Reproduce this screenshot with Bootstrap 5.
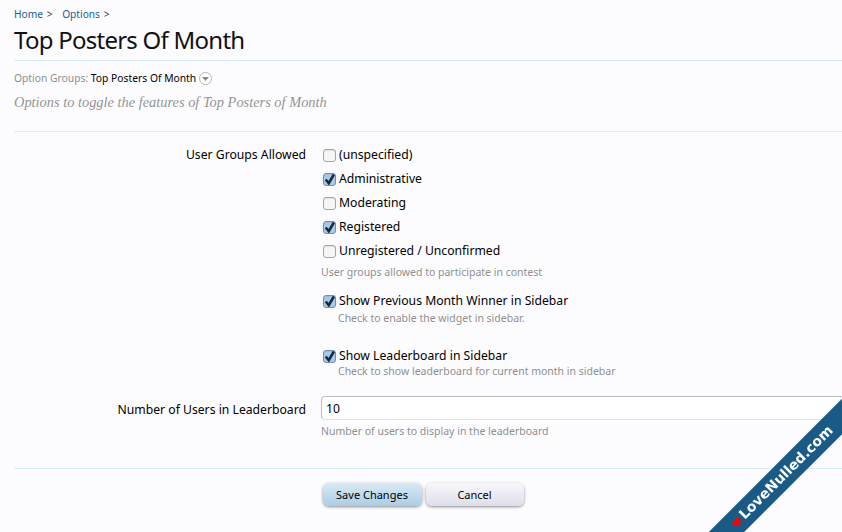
<!DOCTYPE html>
<html lang="en">
<head>
  <meta charset="UTF-8" />
  <meta name="viewport" content="width=device-width, initial-scale=1.0"/>
  <title>Top Posters Of Month - Options</title>
  <link href="https://cdn.jsdelivr.net/npm/bootstrap@5.3.0/dist/css/bootstrap.min.css" rel="stylesheet"/>
  <style>
    html, body { height: 532px; overflow: hidden; }
    body { background: #fcfcff; color: #000; font-family: "Noto Sans", "DejaVu Sans", sans-serif; font-size: 12.2px; line-height: 16px; }
    .page-wrap { padding: 8px 0 0 14px; }
    .crumbs { font-size: 10.2px; line-height: 13px; color: #333; }
    .crumbs a { color: #176093; text-decoration: none; margin-right: 1px; }
    .crumbs span { margin-right: 7px; }
    .page-title { font-family: "Noto Sans", sans-serif; font-size: 24px; line-height: 30px; font-weight: 400; letter-spacing: -.75px; margin: 4px 0 5px; color: #111; }
    .rule { border-top: 1px solid #d7edfc; }
    .rule-grey { border-top: 1px solid #e2eaf2; }
    .groups { font-size: 10.3px; line-height: 14px; margin-top: 10px; color: #8f8f8f; }
    .groups b { font-weight: 400; color: #000; }
    .drop-ico { width: 13px; height: 13px; vertical-align: -3px; margin-left: 3px; }
    .descr { font-family: "Liberation Serif", serif; font-style: italic; font-size: 14.4px; line-height: 18px; color: #949494; margin: 8px 0 20px; }
    .label-col { width: 292px; text-align: right; flex: none; }
    .field-col { margin-left: 15px; flex: 1; min-width: 0; }
    .opt-row { height: 24px; display: flex; align-items: center; margin: 0; padding: 0 0 0 2px; min-height: 0; }
    .form-check-input.opt-box { width: 13px; height: 13px; margin: 0 3px 0 0; float: none; flex: none; border: 1px solid #a5a5a5; border-radius: 3px; background-color: #f6f6f6; box-shadow: inset 0 1px 1px rgba(0,0,0,.08); }
    .form-check-input.opt-box:checked { background-color: #a9c9ea; border-color: #6f8fb3; background-size: 15px; background-image: url("data:image/svg+xml,%3csvg xmlns='http://www.w3.org/2000/svg' viewBox='0 0 20 20'%3e%3cpath fill='none' stroke='%23152a3f' stroke-width='3.4' d='M5 10l4 5 7-12'/%3e%3c/svg%3e"); }
    .hint { font-size: 10.5px; line-height: 14px; color: #8f8f8f; }
    .hint-top { margin-top: 2px; }
    .hint-sub { padding-left: 17px; margin-top: -2px; }
    .hint-tight { margin-top: -4px; }
    .user-groups { margin-top: 11px; }
    .label-top { padding-top: 4px; }
    .label-count { padding-top: 6px; }
    .opt-winner { margin-top: 10px; }
    .opt-board { margin-top: 19px; }
    .count-row { margin-top: 18px; }
    .count-input.form-control { height: 24px; padding: 0 4px; font-size: 12.2px; line-height: 20px; border: 1px solid #bdbdbd; border-bottom-color: #e2e2e2; border-radius: 4px; background: #fff; color: #000; width: 540px; }
    .rule-actions { margin-top: 30px; }
    .action-row { margin: 14px 0 0 -10px; }
    .act-btn.btn { height: 23px; padding: 0; font-size: 11px; line-height: 21px; color: #000; border: 0; border-radius: 6px; box-shadow: 0 1px 3px rgba(0,0,0,.45); }
    .act-save.btn { width: 99px; background: linear-gradient(#dbe9f4, #a9cde5); }
    .act-cancel.btn { width: 98px; background: linear-gradient(#f7f7fb, #dedeea); }
    .ribbon-box { position: fixed; right: 0; bottom: 0; width: 140px; height: 140px; overflow: hidden; }
    .ribbon { position: absolute; left: -28px; top: 69.5px; width: 220px; height: 25px; background: #195a86; transform: rotate(-45deg); color: #fff; font-family: "DejaVu Sans", sans-serif; font-weight: 700; font-size: 14px; line-height: 25px; white-space: nowrap; padding-left: 38px; }
    .ribbon svg { width: 10px; height: 9px; margin-right: 2px; vertical-align: -1px; }
  </style>
</head>
<body>
  <div class="page-wrap">
    <div class="crumbs"><a href="#">Home</a> <span>&gt;</span> <a href="#">Options</a> <span>&gt;</span></div>
    <h1 class="page-title">Top Posters Of Month</h1>
    <div class="rule"></div>
    <div class="groups">Option Groups: <b>Top Posters Of Month</b><svg class="drop-ico" viewBox="0 0 13 13"><circle cx="6.5" cy="6.5" r="6" fill="#fff" stroke="#b5b5b5"/><path d="M3 5h7l-3.500 4z" fill="#8a8a8a"/></svg></div>
    <p class="descr">Options to toggle the features of Top Posters of Month</p>
    <div class="rule-grey"></div>

    <form onsubmit="return false">
      <div class="d-flex user-groups">
        <div class="label-col label-top">User Groups Allowed</div>
        <div class="field-col">
          <label class="opt-row"><input class="form-check-input opt-box" type="checkbox"/>(unspecified)</label>
          <label class="opt-row"><input class="form-check-input opt-box" type="checkbox" checked/>Administrative</label>
          <label class="opt-row"><input class="form-check-input opt-box" type="checkbox"/>Moderating</label>
          <label class="opt-row"><input class="form-check-input opt-box" type="checkbox" checked/>Registered</label>
          <label class="opt-row"><input class="form-check-input opt-box" type="checkbox"/>Unregistered / Unconfirmed</label>
          <div class="hint hint-top">User groups allowed to participate in contest</div>
          <label class="opt-row opt-winner"><input class="form-check-input opt-box" type="checkbox" checked/>Show Previous Month Winner in Sidebar</label>
          <div class="hint hint-sub">Check to enable the widget in sidebar.</div>
          <label class="opt-row opt-board"><input class="form-check-input opt-box" type="checkbox" checked/>Show Leaderboard in Sidebar</label>
          <div class="hint hint-sub hint-tight">Check to show leaderboard for current month in sidebar</div>
        </div>
      </div>
      <div class="d-flex align-items-start count-row">
        <div class="label-col label-count">Number of Users in Leaderboard</div>
        <div class="field-col">
          <input type="text" class="form-control count-input" value="10"/>
          <div class="hint mt-1">Number of users to display in the leaderboard</div>
        </div>
      </div>
      <div class="rule rule-actions"></div>
      <div class="d-flex justify-content-center gap-1 action-row">
        <button class="btn act-btn act-save">Save Changes</button>
        <button class="btn act-btn act-cancel">Cancel</button>
      </div>
    </form>
  </div>
  <div class="ribbon-box">
    <div class="ribbon"><svg viewBox="0 0 11 10"><path d="M5.500 10L.5 5C-1 2 3 -1 5.500 2 8 -1 12 2 10.500 5z" fill="#f00"/></svg>LoveNulled.com</div>
  </div>
</body>
</html>
